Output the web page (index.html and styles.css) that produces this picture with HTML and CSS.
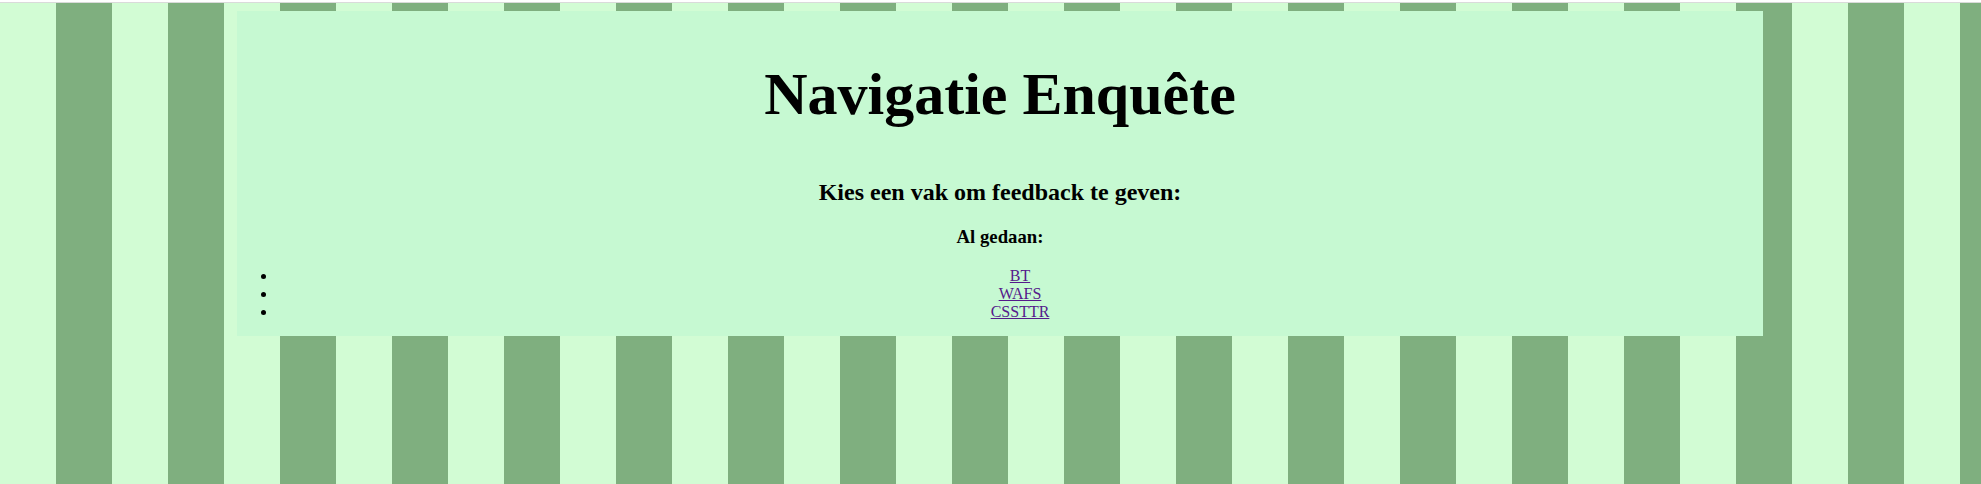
FILE: index.html
```html
<!DOCTYPE html>
<html lang="nl">
<head>
<meta charset="utf-8">
<title>Navigatie Enquête</title>
<link rel="stylesheet" href="styles.css">
</head>
<body>
<div class="topline"></div>
<div class="page">
  <main class="panel">
    <h1 class="title">Navigatie Enquête</h1>
    <h2 class="subtitle">Kies een vak om feedback te geven:</h2>
    <h3 class="done">Al gedaan:</h3>
    <ul class="courses">
      <li><a href="#bt">BT</a></li>
      <li><a href="#wafs">WAFS</a></li>
      <li><a href="#csstr">CSSTTR</a></li>
    </ul>
  </main>
</div>
</body>
</html>
```

FILE: styles.css
```css
html, body {
  margin: 0;
  padding: 0;
  background: #ffffff;
}

body {
  font-family: "Liberation Serif", "Times New Roman", serif;
  color: #000;
  min-height: 100vh;
  display: flex;
  flex-direction: column;
  padding-top: 2px;
  box-sizing: border-box;
}

.topline {
  height: 1px;
  background: #dadada;
}

.page {
  flex: 1;
  background: repeating-linear-gradient(90deg, #d2fcd4 0, #d2fcd4 56px, #7faf7f 56px, #7faf7f 112px);
  padding-top: 8px;
}

.panel {
  display: flow-root;
  margin-left: 237px;
  width: 1526px;
  background: #c6f9d2;
}

.title {
  font-size: 60px;
  font-weight: bold;
  text-align: center;
  margin: 49px 0 50px;
}

.subtitle {
  font-size: 24px;
  text-align: center;
  margin: 20px 0;
}

.done {
  font-size: 18.72px;
  text-align: center;
  margin: 18.72px 0;
}

.courses {
  margin: 16px 0 15px;
  padding-left: 40px;
  text-align: center;
  font-size: 16px;
}

.courses a {
  color: #551a8b;
}
```
